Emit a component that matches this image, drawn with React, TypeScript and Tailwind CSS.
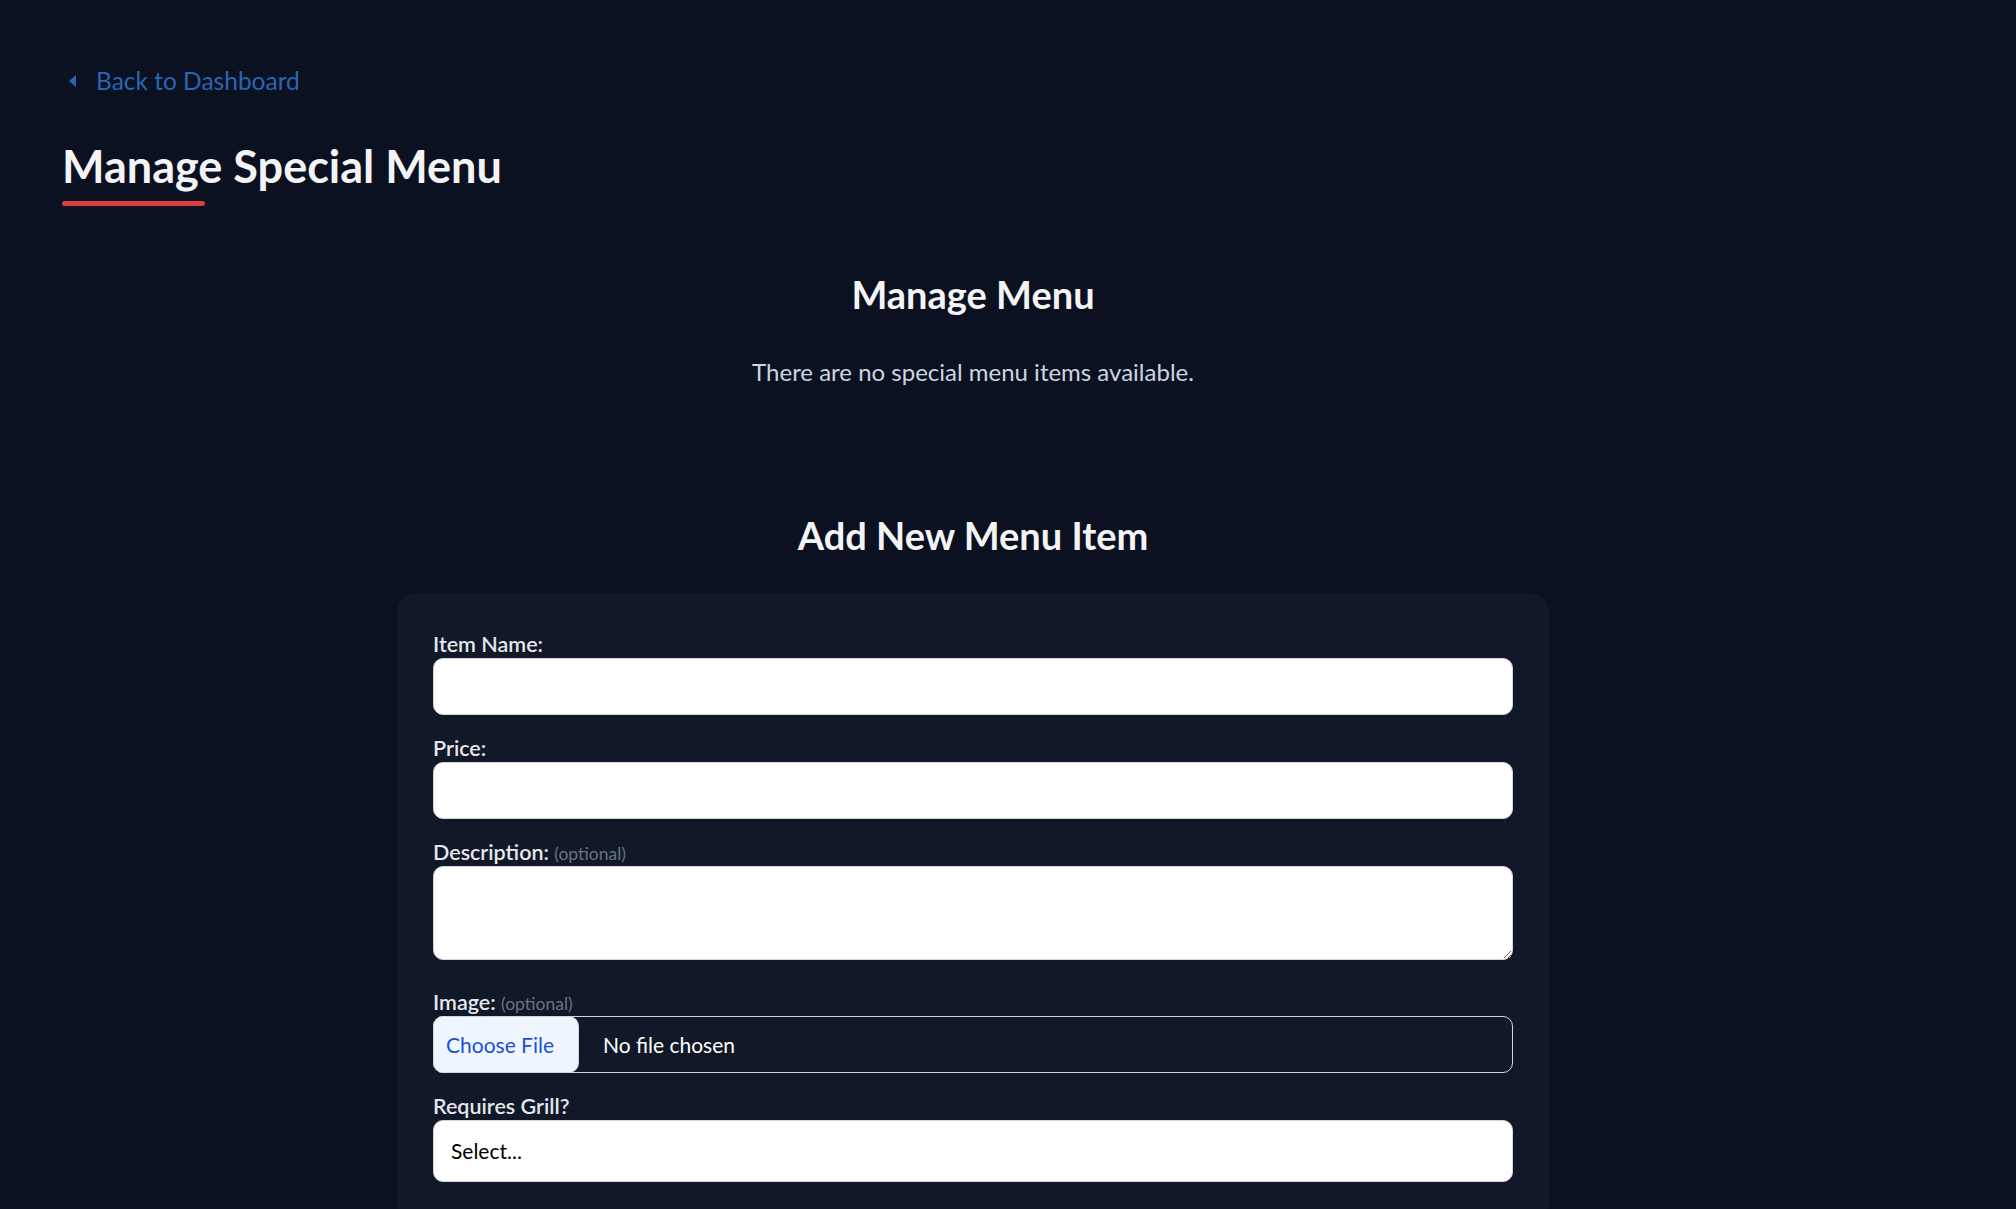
import { useState } from "react";

const ManageSpecialMenu = () => {
  const [grill, setGrill] = useState("");

  return (
    <div className="min-h-screen bg-[#0b1120] font-['Lato','Noto_Sans',sans-serif]">
      <div className="pl-[62px] pr-[132px] pt-[65px] pb-[60px]">
        {/* Back link */}
        <a href="#" className="flex items-center gap-[20px] text-[24.5px] leading-[32px] text-[#2c64b4] w-fit pl-[7px]">
          <svg width="7" height="12" viewBox="0 0 7 12" fill="currentColor">
            <path d="M7 0 L0 6 L7 12 Z" />
          </svg>
          Back to Dashboard
        </a>

        {/* Page title */}
        <div className="mt-[41px] w-fit">
          <h1 className="text-[45px] leading-[56px] font-bold text-gray-100">Manage Special Menu</h1>
          <div className="mt-[7px] h-[5px] w-[143px] rounded-full bg-[#dc3c3c]" />
        </div>

        {/* Existing items */}
        <h2 className="mt-[66px] text-center text-[38px] leading-[44px] font-bold text-gray-100">Manage Menu</h2>
        <p className="mt-[40px] text-center text-[24px] leading-[32px] text-[#cbd5e1]">
          There are no special menu items available.
        </p>

        {/* Add form */}
        <h2 className="mt-[125px] text-center text-[38px] leading-[44px] font-bold text-gray-100">Add New Menu Item</h2>

        <form className="mx-auto mt-[36px] max-w-[1152px] rounded-[20px] bg-[#111827] px-[36px] pt-[37px] pb-[40px]">
          <label className="block text-[21.5px] leading-[28px] font-semibold text-gray-200">Item Name:</label>
          <input type="text" className="block h-[57px] w-full rounded-[10px] border border-gray-300 bg-white px-4 text-[20px] text-black outline-none" />

          <label className="mt-[19px] block text-[21.5px] leading-[28px] font-semibold text-gray-200">Price:</label>
          <input type="text" className="block h-[57px] w-full rounded-[10px] border border-gray-300 bg-white px-4 text-[20px] text-black outline-none" />

          <label className="mt-[19px] block h-[28px] text-[21.5px] leading-[28px] font-semibold text-gray-200">
            Description: <span className="text-[17.5px] leading-none font-normal text-gray-500">(optional)</span>
          </label>
          <textarea className="block h-[94px] w-full rounded-[10px] border border-gray-300 bg-white px-4 py-2 text-[20px] text-black outline-none" />

          <label className="mt-[28px] block h-[28px] text-[21.5px] leading-[28px] font-semibold text-gray-200">
            Image: <span className="text-[17.5px] leading-none font-normal text-gray-500">(optional)</span>
          </label>
          <div className="flex h-[57px] w-full items-stretch rounded-[10px] border border-gray-300">
            <span className="-m-px flex w-[146px] items-center rounded-[10px] border border-gray-300 bg-[#eff6ff] pl-[12px] text-[21px] text-[#1d4ed8]">
              Choose File
            </span>
            <span className="flex items-center pl-[25px] text-[21px] text-white">No file chosen</span>
          </div>

          <label className="mt-[19px] block text-[21.5px] leading-[28px] font-semibold text-gray-200">Requires Grill?</label>
          <select
            value={grill}
            onChange={(e) => setGrill(e.target.value)}
            className="block h-[62px] w-full appearance-none rounded-[10px] border border-gray-300 bg-white pl-[17px] text-[21px] text-black outline-none"
          >
            <option value="">Select...</option>
            <option value="yes">Yes</option>
            <option value="no">No</option>
          </select>
        </form>
      </div>
    </div>
  );
};

export default function App() {
  return <ManageSpecialMenu />;
}
